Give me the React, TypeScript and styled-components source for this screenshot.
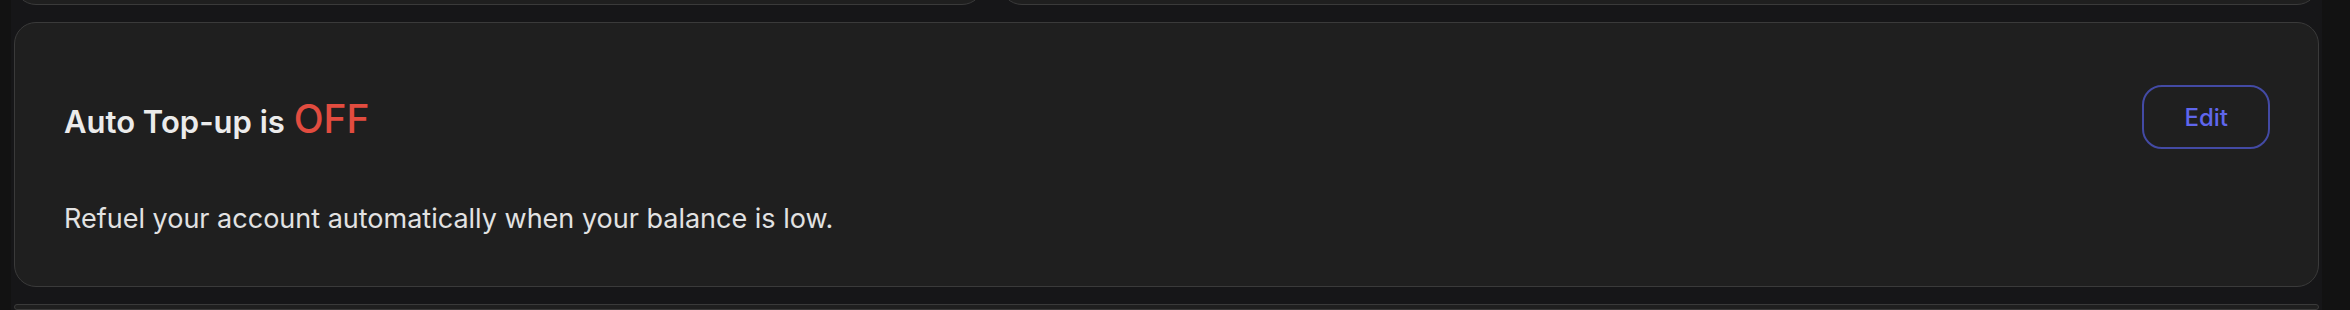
import React from "react";
import styled, { createGlobalStyle } from "styled-components";

const GlobalStyle = createGlobalStyle`
  html, body {
    margin: 0;
    padding: 0;
    background: #121212;
    font-family: Inter, "Noto Sans", "Liberation Sans", sans-serif;
    -webkit-font-smoothing: antialiased;
  }
  * { box-sizing: border-box; }
`;

const Page = styled.div`
  margin: 0 28px 0 11px;
  padding: 0 3px;
  background: #161618;
  height: 310px;
  overflow: hidden;
  display: flex;
  flex-direction: column;
  gap: 17px;
`;

const TopRow = styled.div`
  display: grid;
  grid-template-columns: 970px 1fr;
  gap: 16px;
  margin-top: -95px;
`;

const Card = styled.section<{ $height?: number }>`
  background: #1f1f1f;
  border: 1.5px solid #3a3a3a;
  border-radius: 22px;
  ${(p) => (p.$height ? `height: ${p.$height}px;` : "")}
`;

const MainCard = styled(Card)`
  padding: 48px 48px 48px 49px;
  height: 265px;
`;

const Header = styled.div`
  display: flex;
  align-items: center;
  justify-content: space-between;
  padding: 14px 0;
`;

const Title = styled.h2`
  margin: 0;
  padding-top: 5px;
  font-size: 31px;
  font-weight: 600;
  color: #ebebeb;
  line-height: 1.2;
  letter-spacing: 0;
`;

const Status = styled.span`
  font-size: 39px;
  font-weight: 500;
  color: #e24c3f;
  margin-left: 1px;
`;

const EditButton = styled.button`
  height: 64px;
  padding: 0 40px;
  border: 2px solid #434aa4;
  border-radius: 20px;
  background: transparent;
  color: #5f66ec;
  font-family: Inter, "Noto Sans", sans-serif;
  font-size: 24px;
  font-weight: 500;
  cursor: pointer;
`;

const Description = styled.p`
  margin: 36px 0 0;
  font-size: 27px;
  line-height: 1.5;
  color: #e2e2e2;
  font-weight: 400;
`;

export default function App() {
  return (
    <>
      <GlobalStyle />
      <Page>
        <TopRow>
          <Card $height={100} />
          <Card $height={100} />
        </TopRow>
        <MainCard>
          <Header>
            <Title>
              Auto Top-up is <Status>OFF</Status>
            </Title>
            <EditButton>Edit</EditButton>
          </Header>
          <Description>
            Refuel your account automatically when your balance is low.
          </Description>
        </MainCard>
        <Card $height={100} />
      </Page>
    </>
  );
}
